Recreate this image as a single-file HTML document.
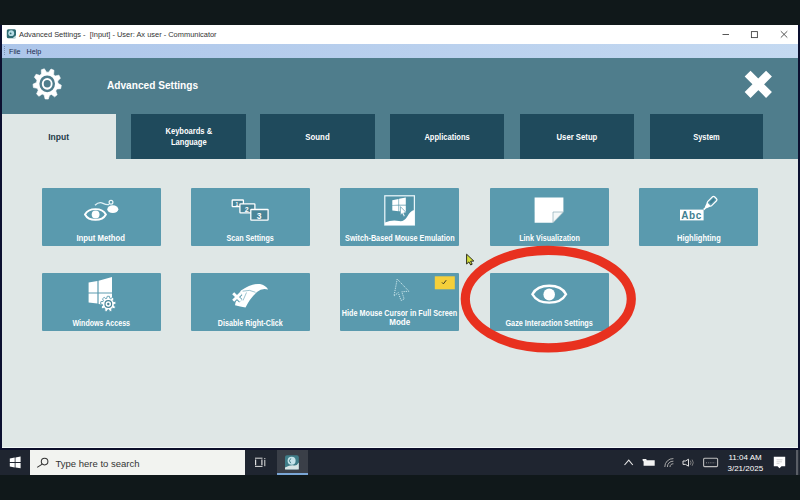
<!DOCTYPE html>
<html><head><meta charset="utf-8">
<style>
*{margin:0;padding:0;box-sizing:border-box}
html,body{width:800px;height:500px;overflow:hidden;background:#10181a;font-family:"Liberation Sans",sans-serif}
.a{position:absolute}
#top{left:0;top:0;width:800px;height:25px;background:#10181a}
#lb{left:0;top:25px;width:2px;height:425px;background:#0c1030}
#title{left:2px;top:25px;width:796px;height:19px;background:#fff}
#menu{left:2px;top:44px;width:796px;height:14px;background:linear-gradient(90deg,#adc6ea,#c4d9f1)}
#hdr{left:2px;top:58px;width:796px;height:101px;background:#4f7d8c}
#content{left:2px;top:159px;width:796px;height:289px;background:#dfe7e6}
#sep{left:0;top:448px;width:800px;height:2px;background:#0c0f2a}
#wl{left:2px;top:447px;width:796px;height:1px;background:#f2f8f8}
#rb{left:798px;top:25px;width:2px;height:425px;background:#0c1030}
#task{left:0;top:450px;width:800px;height:25px;background:#1f2530}
#bot{left:0;top:475px;width:800px;height:25px;background:#10181a}
.tab{top:114px;width:115px;height:45px;background:#1f4a5c;color:#fff;font-weight:bold;font-size:8.7px;display:flex;align-items:center;justify-content:center;text-align:center;line-height:11.5px;padding-top:1.5px}
.tile{width:119px;height:58.3px;border-radius:1px;background:#5a9aae;color:#fff;font-weight:bold;font-size:8.2px;text-align:center}
.lbl span,.tab span{display:inline-block;transform-origin:50% 50%}
.lbl{position:absolute;left:-40px;right:-40px;text-align:center;white-space:nowrap}
svg{position:absolute;overflow:visible}
</style></head><body>
<div class="a" id="top"></div>
<div class="a" id="title"></div>
<div class="a" id="menu"></div>
<div class="a" id="hdr"></div>
<div class="a" id="content"></div>
<div class="a" id="lb"></div>
<div class="a" id="rb"></div>
<div class="a" id="wl"></div>
<div class="a" id="sep"></div>
<div class="a" id="task"></div>
<div class="a" id="bot"></div>

<!-- title bar text -->
<div class="a" style="left:19px;top:30px;font-size:7.45px;color:#333;white-space:nowrap">Advanced Settings -&nbsp; [Input] - User: Ax user - Communicator</div>
<div class="a" style="left:9px;top:46.5px;font-size:7.2px;color:#1a2a4a;white-space:nowrap">File&nbsp;&nbsp; Help</div>

<!-- header -->
<div class="a" style="left:107px;top:79px;font-size:11px;font-weight:bold;color:#fff;white-space:nowrap;transform:scaleX(0.92);transform-origin:0 0">Advanced Settings</div>

<!-- tabs -->
<div class="a tab" style="left:2px;width:114px;background:#dfe7e6;color:#1e3a48"><span style="transform:scaleX(0.98)">Input</span></div>
<div class="a tab" style="left:131px"><span style="transform:scaleX(0.87)">Keyboards &amp;<br>Language</span></div>
<div class="a tab" style="left:260.4px"><span style="transform:scaleX(0.9)">Sound</span></div>
<div class="a tab" style="left:390px;width:114.3px"><span style="transform:scaleX(0.87)">Applications</span></div>
<div class="a tab" style="left:519.6px;width:114.6px"><span style="transform:scaleX(0.89)">User Setup</span></div>
<div class="a tab" style="left:649.5px;width:113.5px"><span style="transform:scaleX(0.86)">System</span></div>

<!-- tiles -->
<div class="a tile" style="left:41.5px;top:188px"><div class="lbl" style="top:46px"><span style="transform:scaleX(0.945)">Input Method</span></div></div>
<div class="a tile" style="left:191px;top:188px"><div class="lbl" style="top:46px"><span style="transform:scaleX(0.875)">Scan Settings</span></div></div>
<div class="a tile" style="left:340.4px;top:188px"><div class="lbl" style="top:46px"><span style="transform:scaleX(0.885)">Switch-Based Mouse Emulation</span></div></div>
<div class="a tile" style="left:489.9px;top:188px"><div class="lbl" style="top:46px"><span style="transform:scaleX(0.88)">Link Visualization</span></div></div>
<div class="a tile" style="left:639.3px;top:188px"><div class="lbl" style="top:46px"><span style="transform:scaleX(0.915)">Highlighting</span></div></div>
<div class="a tile" style="left:41.5px;top:273.1px"><div class="lbl" style="top:46px"><span style="transform:scaleX(0.865)">Windows Access</span></div></div>
<div class="a tile" style="left:191px;top:273.1px"><div class="lbl" style="top:46px"><span style="transform:scaleX(0.87)">Disable Right-Click</span></div></div>
<div class="a tile" style="left:340.4px;top:273.1px"><div class="lbl" style="top:35.5px"><span style="transform:scaleX(0.88)">Hide Mouse Cursor in Full Screen</span></div><div class="lbl" style="top:45px"><span style="transform:scaleX(0.98)">Mode</span></div></div>
<div class="a tile" style="left:489.9px;top:273.1px"><div class="lbl" style="top:46px"><span style="transform:scaleX(0.89)">Gaze Interaction Settings</span></div></div>

<!-- ICONS -->
<svg style="left:0;top:0" width="800" height="500">
<!-- titlebar app icon -->
<rect x="6.8" y="29.2" width="9.2" height="9.1" rx="1.5" fill="#2f6b72"/>
<circle cx="11.2" cy="33.2" r="2.9" fill="#b8dde6"/>
<circle cx="10.6" cy="33.4" r="0.9" fill="#2f6b72"/>
<path d="M12.5,38.3 L16,35.2 L16,38.3Z" fill="#c8e0e2"/>
<path d="M4.5,46 L4.5,56" stroke="#6f86a8" stroke-width="0.8" stroke-dasharray="1,1"/>
<!-- title controls -->
<rect x="722.5" y="34" width="6.5" height="0.9" fill="#444"/>
<rect x="751.4" y="31.6" width="6" height="6" fill="none" stroke="#444" stroke-width="0.9"/>
<path d="M780.8,31.2 L787.3,37.6 M787.3,31.2 L780.8,37.6" stroke="#444" stroke-width="0.9"/>
<!-- header gear -->
<g transform="translate(47.2,83.8) scale(1,1.08) translate(-47.2,-83.8)">
<path fill="#fff" d="M41.43,74.67 L41.32,70.87 L44.36,69.89 L46.51,73.02 L48.64,73.10 L51.01,70.12 L53.97,71.32 L53.60,75.10 L55.18,76.53 L58.91,75.77 L60.41,78.59 L57.69,81.25 L57.99,83.36 L61.33,85.17 L60.67,88.30 L56.88,88.59 L55.75,90.40 L57.15,93.94 L54.63,95.90 L51.54,93.69 L49.51,94.35 L48.30,97.96 L45.11,97.85 L44.16,94.16 L42.18,93.36 L38.95,95.35 L36.57,93.22 L38.21,89.79 L37.21,87.90 L33.45,87.34 L33.01,84.18 L36.47,82.61 L36.91,80.52 L34.39,77.68 L36.08,74.97 L39.74,75.99Z" stroke="#fff" stroke-width="0.6" stroke-linejoin="round"/>
<circle cx="47.2" cy="83.8" r="6.6" fill="none" stroke="#4f7d8c" stroke-width="2.4"/>
<circle cx="47.2" cy="83.8" r="3.5" fill="#4f7d8c"/>
</g>
<!-- header close X -->
<path d="M747.6,73.6 L769,95 M769,73.6 L747.6,95" stroke="#fff" stroke-width="8.3"/>

<!-- Input Method icon -->
<path d="M85,214.5 C88.8,207.3 102.1,207.3 105.9,214.5 C102.1,221.7 88.8,221.7 85,214.5Z" fill="none" stroke="#fff" stroke-width="1.9"/>
<circle cx="95.6" cy="214.5" r="3.9" fill="#fff"/>
<ellipse cx="112.8" cy="209.2" rx="5.5" ry="3.9" fill="#fff"/>
<circle cx="111" cy="202.3" r="1.9" fill="none" stroke="#eef8fa" stroke-width="1.25"/>
<path d="M95,205.3 Q99,201.3 103,203.3 T109.3,204.4" fill="none" stroke="#dff0f5" stroke-width="1.35"/>

<!-- Scan Settings icon -->
<rect x="232.2" y="200" width="11.2" height="6.6" rx="0.6" fill="#4a8598" stroke="#fff" stroke-width="1.3"/>
<text x="235.5" y="206" font-size="5" font-weight="bold" fill="#fff">1</text>
<rect x="239.9" y="203.9" width="15" height="9" rx="0.6" fill="#4a8598" stroke="#fff" stroke-width="1.3"/>
<text x="244.8" y="211.8" font-size="7" font-weight="bold" fill="#fff">2</text>
<rect x="250.8" y="209.5" width="17.3" height="10.7" rx="0.6" fill="#4a8598" stroke="#fff" stroke-width="1.3"/>
<text x="256.8" y="218.6" font-size="8.5" font-weight="bold" fill="#fff">3</text>

<!-- Switch-Based Mouse Emulation icon -->
<rect x="384.8" y="195.8" width="29.6" height="29.2" fill="#5394a8" stroke="#eaf6fa" stroke-width="1.25"/>
<path d="M385,222.5 Q392,219.5 399,221 Q404,222 407,217 Q410,211 414.3,210 L414.3,225 L385,225Z" fill="#fff"/>
<path d="M392.3,200.2 L398.5,198.9 L398.5,204.8 L392.3,205Z M399.1,198.7 L405.8,197.6 L405.8,204.7 L399.1,204.8Z M392.3,205.6 L398.5,205.5 L398.5,211.2 L392.3,210.4Z M399.1,205.5 L405.8,205.4 L405.8,212 L399.1,211.3Z" fill="#fff"/>
<path d="M400.4,206.6 L400.4,215.2 L402.2,213.5 L403.7,216.8 L405.2,216.1 L403.8,212.9 L406.3,212.7Z" fill="#fff" stroke="#5394a8" stroke-width="0.7"/>

<!-- Link Visualization icon -->
<path d="M534.6,197.6 L563.4,197.6 L563.4,212 L553,222.8 L534.6,222.8Z" fill="#fff"/>
<path d="M553,212 L563.4,212 L553,222.8Z" fill="#f4f8f8" stroke="#7aa0ab" stroke-width="0.6"/>

<!-- Highlighting icon -->
<rect x="680" y="209.6" width="23.6" height="10.8" fill="#fff"/>
<text x="681.2" y="219.2" font-size="10" font-weight="bold" fill="#3f7f92" letter-spacing="0.6">Abc</text>
<g transform="translate(709.3,204) rotate(-45) scale(0.88)">
<rect x="-1" y="-3.2" width="11" height="6.4" rx="1.6" fill="none" stroke="#fff" stroke-width="1.4"/>
<rect x="1.5" y="-1.2" width="6.5" height="2.4" fill="#3f7f92"/>
<path d="M-1,-3 L-5.5,-1.4 L-7,0 L-5.5,1.4 L-1,3Z" fill="#fff"/>
<rect x="-9" y="-0.9" width="3" height="1.8" fill="#fff"/>
</g>

<!-- Windows Access icon -->
<path d="M88.6,282.6 L97.4,281.0 L97.4,292.5 L88.6,292.5Z M98.6,280.7 L112,277.0 L112,292.5 L98.6,292.5Z M88.6,293.6 L97.4,293.6 L97.4,303.4 L88.6,302.4Z M98.6,293.6 L112,293.6 L112,306 L98.6,304Z" fill="#fff"/>
<path fill="#fff" stroke="#5a9aae" stroke-width="0.9" d="M106.72,298.42 L107.20,296.28 L109.40,296.28 L109.88,298.42 L110.68,298.71 L112.42,297.38 L114.10,298.79 L113.10,300.74 L113.52,301.48 L115.71,301.58 L116.10,303.74 L114.07,304.59 L113.92,305.42 L115.54,306.91 L114.44,308.81 L112.34,308.16 L111.69,308.70 L111.97,310.88 L109.91,311.63 L108.72,309.78 L107.88,309.78 L106.69,311.63 L104.63,310.88 L104.91,308.70 L104.26,308.16 L102.16,308.81 L101.06,306.91 L102.68,305.42 L102.53,304.59 L100.50,303.74 L100.89,301.58 L103.08,301.48 L103.50,300.74 L102.50,298.79 L104.18,297.38 L105.92,298.71Z"/>
<circle cx="108.3" cy="304" r="3.3" fill="none" stroke="#4a8598" stroke-width="1.2"/>
<circle cx="108.3" cy="304" r="1.2" fill="#4a8598"/>

<!-- Disable Right-Click icon -->
<path d="M241,290.5 Q252,283 260,284 Q265.5,285 268.2,289.5 Q262,287.5 257,292 Q250,298 245.5,307.6 Q240,306.5 235,305.2 Q236,297 241,290.5Z" fill="#fff"/>
<path d="M242.6,291.2 Q250,289 255.5,292.3" fill="none" stroke="#5a9aae" stroke-width="0.6"/>
<path d="M246.5,292.5 L243,300.5" fill="none" stroke="#5a9aae" stroke-width="0.6"/>
<path d="M233.2,293.3 L240.8,300.8 M240.8,293.3 L233.2,300.8" stroke="#5a9aae" stroke-width="4.6"/>
<path d="M233.2,293.3 L240.8,300.8 M240.8,293.3 L233.2,300.8" stroke="#fff" stroke-width="2.9"/>

<!-- Hide Mouse Cursor icon -->
<path d="M397.2,279 L394,296 L398.3,292.6 L401,300.5 L404.2,299 L401.8,291.8 L408.8,291.2Z" fill="none" stroke="#d8eef2" stroke-width="0.9" stroke-dasharray="1.2,1"/>
<rect x="434.8" y="276.3" width="20" height="13" fill="#f5cf3a"/>
<path d="M442,282.4 L443.4,283.9 L446.2,280.2" fill="none" stroke="#2a2a20" stroke-width="0.9"/>

<!-- Gaze Interaction icon -->
<path d="M532.4,294.2 C538.5,283 560,283 566,294.2 C560,305.4 538.5,305.4 532.4,294.2Z" fill="none" stroke="#fff" stroke-width="2.4"/>
<ellipse cx="549.2" cy="294.5" rx="5.8" ry="6.1" fill="#fff"/>
</svg>

<!-- red ellipse -->
<svg style="left:0;top:0" width="800" height="500"><ellipse cx="548.3" cy="299.1" rx="83" ry="48.7" fill="none" stroke="#e8311f" stroke-width="9.2"/></svg>

<!-- taskbar -->
<div class="a" style="left:30px;top:450px;width:215px;height:25px;background:#f2f3f0"></div>
<div class="a" style="left:55.5px;top:458px;font-size:9.5px;color:#333;white-space:nowrap">Type here to search</div>
<div class="a" style="left:277px;top:450px;width:31px;height:25px;background:#3a3f48"></div>
<div class="a" style="left:277px;top:472.5px;width:31px;height:2.5px;background:#7aa6d6"></div>
<div class="a" style="left:728.5px;top:452.5px;font-size:8px;color:#fff;white-space:nowrap">11:04 AM</div>
<div class="a" style="left:727.5px;top:463.5px;font-size:8px;color:#fff;white-space:nowrap">3/21/2025</div>

<svg style="left:0;top:0" width="800" height="500">
<!-- start logo -->
<path d="M9.8,458.4 L14.7,457.6 L14.7,462.1 L9.8,462.1Z M15.5,457.5 L20.6,456.6 L20.6,462.1 L15.5,462.1Z M9.8,462.9 L14.7,462.9 L14.7,467.4 L9.8,466.6Z M15.5,462.9 L20.6,462.9 L20.6,468.3 L15.5,467.5Z" fill="#fff"/>
<!-- search magnifier -->
<circle cx="44.6" cy="461.6" r="3.3" fill="none" stroke="#333" stroke-width="1.05"/>
<path d="M42.2,464.1 L37.2,467.4" stroke="#333" stroke-width="1.1"/>
<!-- task view -->
<path d="M255,458.2 L262.5,458.2 M255,466.4 L262.5,466.4" stroke="#ddd" stroke-width="1"/>
<path d="M255.6,459.4 L255.6,465.2 M261.9,459.4 L261.9,465.2" stroke="#ddd" stroke-width="1.2"/>
<path d="M264.8,459.8 L264.8,466.2" stroke="#ddd" stroke-width="1"/>
<rect x="264.3" y="458" width="1" height="1" fill="#ddd"/>
<!-- app icon -->
<rect x="285" y="455.2" width="13.8" height="14.2" rx="2" fill="#3f7d88"/>
<circle cx="291.6" cy="460.8" r="4" fill="#c6e4ea"/>
<path d="M290.8,458.4 L289.4,460.8 L290.8,463.2" fill="none" stroke="#3f7d88" stroke-width="1"/>
<path d="M285,467.5 Q291,464.5 294,465.5 Q297,466 298.8,462.5 L298.8,469.4 L285,469.4Z" fill="#d9e6e6"/>
<!-- tray -->
<path d="M624.5,465 L628.75,460.2 L632.8,465" fill="none" stroke="#e6e6e6" stroke-width="1.1"/>
<path d="M642.6,459 L646.2,459 L646.8,460.2 L654.7,460.2 L654.7,465.8 L643.6,465.8 L643.6,461.4 L642.6,460.6Z" fill="#f2f2f2"/>
<path d="M664.8,467 A8.2,8.2 0 0 1 673.4,458.6 M667.4,467 A5.6,5.6 0 0 1 673.4,461.2 M670,467 A3,3 0 0 1 673.4,463.8" fill="none" stroke="#a8a8a8" stroke-width="1"/>
<path d="M683,461 L685.5,461 L688.5,459.2 L688.5,466.2 L685.5,464.4 L683,464.4Z" fill="none" stroke="#e0e0e0" stroke-width="1"/>
<path d="M690.3,460.6 Q691.8,462.7 690.3,464.8 M692.1,459.6 Q694.4,462.7 692.1,465.8" fill="none" stroke="#888" stroke-width="0.9"/>
<rect x="703.6" y="458.2" width="14" height="8.4" rx="1" fill="none" stroke="#bdbdbd" stroke-width="1.1"/>
<path d="M706,462.8 L715.2,462.8" stroke="#aaa" stroke-width="0.8" stroke-dasharray="1,1.2"/>
<rect x="796" y="450" width="2.2" height="25" fill="#5a5e66"/>
<path d="M773.8,456.8 L785.2,456.8 L785.2,466.2 L781.5,466.2 L779.5,468.3 L777.5,466.2 L773.8,466.2Z" fill="#fff"/>
<path d="M776.5,459.8 L782.5,459.8 M776.5,461.8 L782,461.8 M776.5,463.6 L779.5,463.6" stroke="#c8c8c8" stroke-width="0.8"/>
<!-- yellow mouse cursor -->
<path d="M466.6,254.2 L466.6,264 L468.9,261.9 L470.7,265 L472.2,264.2 L470.6,261.3 L473.8,261Z" fill="#d4df3c" stroke="#1a1a10" stroke-width="0.9"/>
</svg>
</body></html>
